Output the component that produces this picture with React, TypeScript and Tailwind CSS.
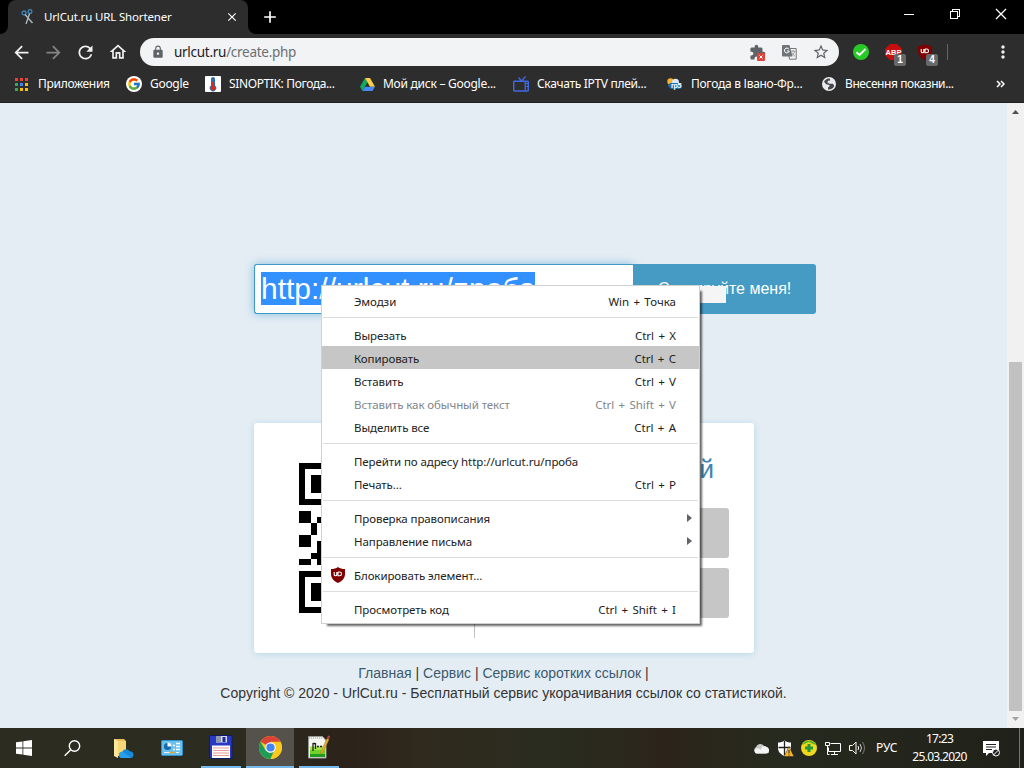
import React from "react";
import {
  MdAdd,
  MdArrowBack,
  MdArrowForward,
  MdClose,
  MdExtension,
  MdLock,
  MdMoreVert,
  MdOutlineHome,
  MdRefresh,
  MdStarBorder,
} from "react-icons/md";
import { FcGoogle } from "react-icons/fc";

function Scissors() {
  return (
    <svg width="14" height="16" viewBox="0 0 14 16" fill="none">
      <circle cx="3" cy="4" r="2" stroke="#3e86b8" strokeWidth="1.3" />
      <circle cx="9" cy="2.5" r="1.9" stroke="#3e86b8" strokeWidth="1.3" />
      <path d="M4 5.5 11.5 14M8.6 4.5 5 15" stroke="#aeb4b8" strokeWidth="1.4" />
    </svg>
  );
}

function AppsGrid() {
  const colors = ["#ea4335", "#ea4335", "#ea4335", "#34a853", "#4285f4", "#fbbc05", "#34a853", "#fbbc05", "#fbbc05"];
  return (
    <svg width="13" height="13" viewBox="0 0 13 13" shapeRendering="crispEdges">
      {colors.map((c, i) => (
        <rect key={i} x={(i % 3) * 5} y={Math.floor(i / 3) * 5} width="3" height="3" fill={c} />
      ))}
    </svg>
  );
}

function Thermometer() {
  return (
    <svg width="16" height="16" viewBox="0 0 16 16">
      <rect width="16" height="16" rx="1" fill="#fff" />
      <path d="M6 3a2 2 0 0 1 4 0v6.5a3.2 3.2 0 1 1-4 0z" fill="#2e6da8" />
      <path d="M7 6h2v4.2a2.2 2.2 0 1 1-2 0z" fill="#e2231a" />
    </svg>
  );
}

function Drive() {
  return (
    <svg width="15" height="13" viewBox="0 0 15 13">
      <path d="M5 0 0 8.7 2.5 13 7.5 4.3z" fill="#11a861" />
      <path d="M5 0h5l5 8.7h-5z" fill="#ffcf48" />
      <path d="M2.5 13 5 8.7h10L12.5 13z" fill="#4688f4" />
    </svg>
  );
}

function Television() {
  return (
    <svg width="16" height="16" viewBox="0 0 16 16" fill="none" stroke="#4169e1">
      <path d="M5.5 1.5 8.5 5 12.5.5" strokeWidth="1.3" />
      <rect x=".7" y="5.2" width="14.6" height="9.8" rx="1" strokeWidth="1.500" />
      <path d="M12.200 5.500v9" strokeWidth="1.300" />
      <path d="M12.500 7.500h3M12.500 10.500h3" strokeWidth="1" />
    </svg>
  );
}

function WeatherRp5() {
  return (
    <svg width="16" height="12" viewBox="0 0 16 12">
      <circle cx="3.5" cy="3.5" r="3.2" fill="#f7b32b" />
      <circle cx="8.5" cy="4.3" r="3.5" fill="#d9ebf8" />
      <path d="M3 5h12v4l-2 2H4L1 8z" fill="#1672b8" />
      <text x="4" y="9.5" fontSize="7" fontWeight="700" fontFamily="Liberation Sans, sans-serif" fill="#fff">rp5</text>
    </svg>
  );
}

function Globe() {
  return (
    <svg width="14" height="14" viewBox="0 0 14 14">
      <circle cx="7" cy="7" r="7" fill="#e8eaed" />
      <path d="M7.800 1.600C5.500 1.200 3 2.500 2 4.800l2.200 2.500 3.300.6v1.400L6 10.500v2c3 .3 5.300-1.300 6.200-3.500L11 6.800H7.500L5.200 5.300l1-1.500 2-.3z" fill="#45484b" />
    </svg>
  );
}

function Translate() {
  return (
    <svg width="15" height="15" viewBox="0 0 15 15">
      <path d="M5.5 3.5h8.7v10.7H7.5z" fill="none" stroke="#777" />
      <path d="M1 0h6.5l3 11.5H1a1 1 0 0 1-1-1V1a1 1 0 0 1 1-1z" fill="#70757a" />
      <path d="M6.8 4.1A2.4 2.4 0 1 0 7.2 6H5" fill="none" stroke="#fff" />
      <path d="M8.8 6.2h4.7M11 5v1.2M12.5 6.4c-.4 2-1.8 3.8-3 4.5M9.8 7.5c.6 1.6 2 3 3.2 3.7" fill="none" stroke="#888" strokeWidth=".8" />
    </svg>
  );
}

function CheckCircle() {
  return (
    <svg width="16" height="16" viewBox="0 0 16 16">
      <circle cx="8" cy="8" r="8" fill="#27cb27" />
      <path d="M3.500 8.300 6.500 11 12.500 5" fill="none" stroke="#fff" strokeWidth="1.900" />
    </svg>
  );
}

function AdblockIcon() {
  return (
    <svg width="17" height="16" viewBox="0 0 17 16">
      <path d="M5 0h7l5 5v6l-5 5H5l-5-5V5z" fill="#c70d0d" />
      <text x="8.5" y="11" textAnchor="middle" fontSize="7.500" fontWeight="700" fontFamily="Liberation Sans, sans-serif" fill="#fff">ABP</text>
    </svg>
  );
}

function Shield() {
  return (
    <svg width="14" height="16" viewBox="0 0 14 16">
      <path d="M7 0C9 1.5 11 2 14 2v5c0 4.5-3 7-7 9-4-2-7-4.500-7-9V2c3 0 5-.5 7-2z" fill="#800000" />
      <path d="M3.200 5v2.500a1.300 1.300 0 0 0 2.600 0V5M7 5v3.800h1.600a1.900 1.900 0 0 0 0-3.800H7" fill="none" stroke="#fff" strokeWidth="1.100" />
    </svg>
  );
}

function Badge({ children }: { children: React.ReactNode }) {
  return (
    <span className="absolute top-[16px] left-[17px] flex h-[12px] w-[12px] items-center justify-center rounded-[2px] bg-[#66696c] font-['Liberation_Sans',sans-serif] text-[10px] leading-none font-bold text-white">
      {children}
    </span>
  );
}

function TabStrip() {
  return (
    <div className="flex h-[34px] bg-black">
      <div className="flex w-2 items-end bg-[#2d2d2d]"><div className="h-full w-2 rounded-br-lg bg-black" /></div>
      <div className="w-60 bg-black">
        <div className="flex h-full items-center rounded-t-lg bg-[#2d2d2d] pl-[13px]">
          <Scissors />
          <span className="ml-[9px] w-[178px] text-[11.5px] tracking-[-0.16px] whitespace-nowrap text-white">UrlCut.ru URL Shortener</span>
          <MdClose size={14} color="#fff" className="ml-[3px]" />
        </div>
      </div>
      <div className="flex w-2 bg-[#2d2d2d]"><div className="h-full w-2 rounded-bl-lg bg-black" /></div>
      <MdAdd size={20} color="#fff" className="mt-[7px] ml-[4px]" />
      <div className="ml-auto flex">
        <svg width="138" height="28" viewBox="0 0 138 28" fill="none" stroke="#fff" shapeRendering="crispEdges">
          <path d="M18 14.500h10" />
          <path d="M64.500 11.500h7v7h-7zM66.500 11v-1.500h7v7H72" />
          <path d="m110 9 10 10m0-10-10 10" shapeRendering="auto" strokeWidth="1.300" />
        </svg>
      </div>
    </div>
  );
}

function Toolbar() {
  return (
    <div className="flex h-[36px] items-center bg-[#2d2d2d] pl-[6px] text-[#f1f1f1]">
      <div className="flex w-8 justify-center pr-px"><MdArrowBack size={21} /></div>
      <div className="flex w-8 justify-center pr-px text-[#858585]"><MdArrowForward size={21} /></div>
      <div className="flex w-8 justify-center pr-px"><MdRefresh size={21} /></div>
      <div className="flex w-8 justify-center"><MdOutlineHome size={20} /></div>
      <div className="ml-[6px] flex h-7 w-[699px] items-center rounded-full bg-[#f1f3f4] pr-[2px] pl-[11px]">
        <MdLock size={14} color="#5f6368" />
        <span className="ml-[9px] text-[13.5px] tracking-[-0.28px] whitespace-nowrap text-[#202124]">
          urlcut.ru<span className="text-[#6b7074]">/create.php</span>
        </span>
        <div className="ml-auto flex text-[#5f6368]">
          <div className="relative flex h-7 w-8 items-center justify-center">
            <MdExtension size={17} />
            <svg className="absolute top-[15px] left-[16px]" width="8" height="8" viewBox="0 0 8 8">
              <rect width="8" height="8" rx="1" fill="#db4437" />
              <path d="m2.500 2.500 3 3m0-3-3 3" stroke="#fff" />
            </svg>
          </div>
          <div className="flex w-8 items-center justify-center"><Translate /></div>
          <div className="flex w-8 items-center justify-center"><MdStarBorder size={18} /></div>
        </div>
      </div>
      <div className="ml-[6px] flex w-8 justify-center"><CheckCircle /></div>
      <div className="relative flex h-7 w-8 items-center justify-center"><AdblockIcon /><Badge>1</Badge></div>
      <div className="relative flex h-7 w-8 items-center justify-center"><Shield /><Badge>4</Badge></div>
      <div className="ml-[6px] h-4 w-px bg-[#666]" />
      <MdMoreVert size={20} className="ml-[45px]" />
    </div>
  );
}

type Bookmark = { icon: React.ReactNode; label: string; width: string; pad: string; tracking: string };

const bookmarks: Bookmark[] = [
  { icon: <AppsGrid />, label: "Приложения", width: "w-[111px]", pad: "gap-[10px]", tracking: "tracking-[-0.3px]" },
  { icon: <span className="flex h-4 w-4 items-center justify-center rounded-full bg-white"><FcGoogle size={14} /></span>, label: "Google", width: "w-[79px]", pad: "gap-[8px]", tracking: "tracking-[-0.3px]" },
  { icon: <Thermometer />, label: "SINOPTIK: Погода...", width: "w-[155px]", pad: "gap-[8px]", tracking: "tracking-[-0.37px]" },
  { icon: <Drive />, label: "Мой диск – Google...", width: "w-[153px]", pad: "gap-[8px]", tracking: "tracking-[-0.26px]" },
  { icon: <Television />, label: "Скачать IPTV плей...", width: "w-[154px]", pad: "gap-[8px]", tracking: "tracking-[-0.32px]" },
  { icon: <WeatherRp5 />, label: "Погода в Івано-Фр...", width: "w-[155px]", pad: "gap-[8px]", tracking: "tracking-[-0.28px]" },
  { icon: <Globe />, label: "Внесення показни...", width: "w-[172px]", pad: "gap-[9px]", tracking: "tracking-[-0.42px]" },
];

function Bookmarks() {
  return (
    <div className="flex h-[33px] items-center border-b border-[#202020] bg-[#2d2d2d] pb-[4px] pl-[15px] text-[12px] text-white">
      {bookmarks.map((b) => (
        <div key={b.label} className={`flex shrink-0 items-center whitespace-nowrap ${b.width} ${b.pad} ${b.tracking}`}>
          {b.icon}
          <span>{b.label}</span>
        </div>
      ))}
      <svg className="ml-[2px]" width="9" height="8" viewBox="0 0 9 8" fill="none" stroke="#fff" strokeWidth="1.500">
        <path d="m1 1 3 3-3 3M5 1l3 3-3 3" />
      </svg>
    </div>
  );
}

const qrRows = [
  "1111", "1000", "1011", "1011", "1011", "1000", "1111", "0000",
  "1100", "1101", "0010", "0010", "1100", "1101", "0001", "0011", "1101", "0000",
  "1111", "1000", "1011", "1011", "1011", "1000", "1111",
];

function QrCode() {
  return (
    <svg width="24" height="150" viewBox="0 0 24 150" shapeRendering="crispEdges">
      {qrRows.flatMap((row, y) =>
        row.split("").map((cell, x) =>
          cell === "1" ? <rect key={`${x}-${y}`} x={x * 6} y={y * 6} width="6" height="6" /> : null,
        ),
      )}
    </svg>
  );
}

type Item = { label: string; keys?: string; state?: "active" | "disabled"; sub?: boolean; shield?: boolean };

const groups: Item[][] = [
  [{ label: "Эмодзи", keys: "Win + Точка" }],
  [
    { label: "Вырезать", keys: "Ctrl + X" },
    { label: "Копировать", keys: "Ctrl + C", state: "active" },
    { label: "Вставить", keys: "Ctrl + V" },
    { label: "Вставить как обычный текст", keys: "Ctrl + Shift + V", state: "disabled" },
    { label: "Выделить все", keys: "Ctrl + A" },
  ],
  [{ label: "Перейти по адресу http://urlcut.ru/проба" }, { label: "Печать...", keys: "Ctrl + P" }],
  [{ label: "Проверка правописания", sub: true }, { label: "Направление письма", sub: true }],
  [{ label: "Блокировать элемент...", shield: true }],
  [{ label: "Просмотреть код", keys: "Ctrl + Shift + I" }],
];

function ContextMenu() {
  return (
    <div className="absolute top-[285px] left-[321px] h-[339px] w-[379px] border border-[#d0d0d0] bg-white pt-[3px] text-[11.5px] text-[#222] shadow-[4px_4px_2px_-2px_rgba(0,0,0,0.6)]">
      {groups.map((group, g) => (
        <div key={g}>
          {g > 0 && <div className="mx-px my-[5px] h-px bg-[#dadce0]" />}
          {group.map((item) => (
            <div
              key={item.label}
              className={`flex h-[23px] items-center whitespace-nowrap ${item.state === "active" ? "bg-[#c6c6c6]" : ""} ${item.state === "disabled" ? "text-[#80868b]" : ""}`}
            >
              <div className="w-8 shrink-0 pl-[9px]">{item.shield && <Shield />}</div>
              <span className="pt-[2px] tracking-[-0.09px]">{item.label}</span>
              {item.keys && <span className="mr-[23px] ml-auto pt-[2px] [word-spacing:1.3px]">{item.keys}</span>}
              {item.sub && (
                <svg className="mr-[7px] ml-auto" width="5" height="8" viewBox="0 0 5 8">
                  <path d="m0 0 5 4-5 4z" fill="#5f6368" />
                </svg>
              )}
            </div>
          ))}
        </div>
      ))}
    </div>
  );
}

function Page() {
  return (
    <div className="flex h-[625px] bg-[#e5edf4] font-['Liberation_Sans',Arial,sans-serif]">
      <div className="flex w-[1007px] flex-col pt-[161px]">
        <div className="relative ml-[254px] flex h-[50px] w-[562px]">
          <div className="h-[50px] w-[380px] rounded-l-[3px] border border-r-0 border-[#3b9ac6] bg-white pt-[7px] pl-[6px] shadow-[0_0_10px_rgba(70,155,210,0.6)]">
            <span className="flex h-[33px] w-[274px] items-center bg-[#3390ff] text-[30px] leading-[33px] whitespace-nowrap text-white">http://urlcut.ru/проба</span>
          </div>
          <div className="flex h-[50px] w-[183px] items-center justify-center rounded-r-[3px] bg-[#459bc4] text-[16px] whitespace-nowrap text-white">Скопируйте меня!</div>
          <div className="absolute top-[22px] left-[446px] h-[17px] w-[26px] bg-[#f5f5f5]" />
        </div>
        <div className="mt-[109px] ml-[254px] flex h-[230px] w-[500px] rounded-[3px] bg-white shadow-[0_1px_6px_rgba(70,165,200,0.3)]">
          <div className="h-[215px] w-[221px] border-r border-[#c0c0c0] pt-[40px] pl-[45px]"><QrCode /></div>
          <div className="flex w-[254px] flex-col items-end pt-[31px]">
            <h2 className="mr-[15px] h-[54px] text-[26px] leading-[30px] text-[#3e83b2]">й</h2>
            <div className="h-[50px] w-[210px] rounded-[3px] bg-[#c6c6c6]" />
            <div className="mt-[10px] h-[50px] w-[210px] rounded-[3px] bg-[#c6c6c6]" />
          </div>
        </div>
        <div className="mt-[10px] text-center text-[14px] leading-5 whitespace-nowrap text-[#333]">
          <div>
            <span className="text-[#3c5a6e]">Главная</span> | <span className="text-[#3c5a6e]">Сервис</span> | <span className="text-[#3c5a6e]">Сервис коротких ссылок</span> |
          </div>
          <div>Copyright © 2020 - UrlCut.ru - Бесплатный сервис укорачивания ссылок со статистикой.</div>
        </div>
      </div>
      <div className="flex w-[17px] flex-col items-center bg-[#f1f1f1] pt-[7px]">
        <svg width="7" height="4" viewBox="0 0 7 4"><path d="M0 4 3.500 0 7 4z" fill="#505050" /></svg>
        <div className="mt-[248px] h-[349px] w-[13px] bg-[#c1c1c1]" />
        <svg className="mt-[6px]" width="7" height="4" viewBox="0 0 7 4"><path d="M0 0 3.500 4 7 0z" fill="#a3a3a3" /></svg>
      </div>
    </div>
  );
}

function FolderCloud() {
  return (
    <svg width="21" height="21" viewBox="0 0 21 21">
      <path d="M1 1h10l2 2v15H4z" fill="#e8bf5b" />
      <path d="M1 1l4 2v17l-4-2z" fill="#ffe69b" />
      <path d="M5 3h8v12l-8 3z" fill="#f7d675" />
      <path d="M6 17.500a3 3 0 0 1 3-3.200 4.200 4.200 0 0 1 7.600-1A3.500 3.500 0 0 1 20.500 17a3 3 0 0 1-2.500 3H9a3 3 0 0 1-3-2.500z" fill="#168bdc" />
      <path d="m10 14 8 6H9a3 3 0 0 1-3-2.500A3 3 0 0 1 10 14z" fill="#2aa0ec" />
    </svg>
  );
}

function ControlPanel() {
  return (
    <svg width="22" height="16" viewBox="0 0 22 16">
      <rect x=".5" y=".5" width="21" height="15" rx="1" fill="#6bc1ee" stroke="#338fc9" />
      <circle cx="6.500" cy="6.500" r="3.600" fill="#1769ad" />
      <path d="M6.500 6.500V2.500a4 4 0 0 1 4 4z" fill="#fff" />
      <path d="M12 5.500h2m-2 4h2m1-6h4m-4 3h4m-4 3h4" stroke="#fff" strokeWidth="1.400" />
      <path d="M3 12.500h7m5 0h3" stroke="#e9f7ff" />
      <path d="M8.500 12.500h5" stroke="#e8a824" strokeWidth="1.500" />
    </svg>
  );
}

function Floppy() {
  return (
    <svg width="24" height="24" viewBox="0 0 24 24">
      <path d="M1 .5h22v23H2L.5 22V.5z" fill="#2739c5" stroke="#121a68" />
      <path d="M7 1h11v6.500H7z" fill="#d7dbe5" />
      <path d="M7 1h5v6.500H7z" fill="#8f97ac" /><path d="M13.500 2h3v5h-3z" fill="#1c2b98" />
      <path d="M3 10.500h18V23H3z" fill="#fff" />
      <path d="M4 13h16M4 15.500h16M4 18h16M4 20.500h16" stroke="#e79b9b" strokeWidth="1.200" />
    </svg>
  );
}

function ChromeLogo() {
  return (
    <svg width="23" height="23" viewBox="0 0 24 24">
      <circle cx="12" cy="12" r="12" fill="#fbc91c" />
      <path d="M12 12 1.600 6A12 12 0 0 1 22.400 6H12z" fill="#dc4437" />
      <path d="M1.600 6 7 15.200 12 17.400 12 12h5L12 24A12 12 0 0 1 1.600 6z" fill="#1c9d58" />
      <path d="M12 6.500h10.600A12 12 0 0 1 12 24l5-9z" fill="#fbc91c" />
      <circle cx="12" cy="12" r="5.500" fill="#fff" />
      <circle cx="12" cy="12" r="4.300" fill="#4285f4" />
    </svg>
  );
}

function NotepadIcon() {
  return (
    <svg width="24" height="24" viewBox="0 0 24 24">
      <path d="M1.500 1.500h14l3.500 4v17.500H1.500z" fill="#f3f5ee" stroke="#999" />
      <path d="M3 11.500h15V22H3z" fill="#a5e83c" /><path d="M3 15h15v7H3z" fill="#6fd22a" /><path d="M3 19h15v3H3z" fill="#249a1e" />
      <path d="M2 3h13" stroke="#999" strokeDasharray="1 1" />
      <path d="M6 16V8M6 8.500h2M8.500 8v6M10 11.500h2M13 11.500h2" stroke="#222" strokeWidth="1.300" fill="none" />
      <path d="m13.500 17.500 6.500-14 2 1-6 12.500-2.500 2z" fill="#e8ae34" stroke="#a87a20" strokeWidth=".5" />
      <path d="m20 3 1.200-2.500 2 1L22 4z" fill="#b9424a" />
    </svg>
  );
}

function Taskbar() {
  return (
    <div className="flex h-10 items-center bg-[linear-gradient(to_right,#2c2d20_0%,#2b2b20_25%,#2c221a_34%,#2f2a1d_41%,#2a2c20_54%,#2c241b_65%,#272a1e_76%,#20211a_100%)] text-white">
      <div className="flex w-12 justify-center">
        <svg width="16" height="16" viewBox="0 0 16 16" fill="#fff"><path d="M0 2.300 6.500 1.400v6.100H0zM7.300 1.300 16 0v7.500H7.300zM0 8.400h6.500v6.200L0 13.700zM7.300 8.400H16V16l-8.700-1.300z" /></svg>
      </div>
      <div className="flex w-12 justify-center">
        <svg width="17" height="17" viewBox="0 0 17 17" fill="none" stroke="#fff" strokeWidth="1.400"><circle cx="10.500" cy="6" r="5.200" /><path d="M6.800 9.700.7 15.800" /></svg>
      </div>
      <div className="flex w-[54px] justify-center"><FolderCloud /></div>
      <div className="flex w-[43px] justify-center"><ControlPanel /></div>
      <div className="ml-[8px] flex h-10 w-[40px] items-center justify-center border-b-2 border-[#76b9ed]"><Floppy /></div>
      <div className="ml-[5px] flex h-10 w-12 items-center justify-center border-b-2 border-[#76b9ed] bg-[#55524b]"><ChromeLogo /></div>
      <div className="ml-[5px] flex h-10 w-[40px] items-center justify-center border-b-2 border-[#76b9ed]"><NotepadIcon /></div>
      <div className="ml-auto flex items-center">
        <div className="flex w-6 justify-center">
          <svg width="16" height="11" viewBox="0 0 16 11"><path d="M4 10.500a3.500 3.500 0 0 1-1-6.500A4.500 4.500 0 0 1 11 3a4 4 0 0 1 1.500 7.500z" fill="#c8c8c8" /><path d="M3 10.500a2.800 2.800 0 0 1 1-5.200c2 0 3 1 4 1.500A4 4 0 0 1 16 8a2.500 2.500 0 0 1-2.500 2.500z" fill="#f4f4f4" /></svg>
        </div>
        <div className="flex w-6 justify-center">
          <svg width="17" height="17" viewBox="0 0 17 17"><path d="M7.500.5c2 1.500 4 2 6.500 2V8c0 4-3 6.500-6.500 8C4 14.500 1 12 1 8V2.500c2.500 0 4.500-.5 6.500-2z" fill="#fff" /><path d="M7.500 1v14M1.500 7.500h12" stroke="#222" strokeWidth="1.300" /><path d="m12 6.500 5 10H7z" fill="#f8b72a" stroke="#222" strokeWidth=".5" /><path d="M12 10v3.500m0 1v1" stroke="#222" /></svg>
        </div>
        <div className="flex w-6 justify-center">
          <svg width="16" height="16" viewBox="0 0 16 16"><circle cx="8" cy="8" r="8" fill="#f2d71f" /><path d="M1 5A8 8 0 0 1 15 5l-3-1-4-2z" fill="#52b62c" /><path d="M6.500 4h3v2.500H12v3H9.500V12h-3V9.500H4v-3h2.500z" fill="#21993a" /></svg>
        </div>
        <div className="flex w-6 justify-center">
          <svg width="16" height="15" viewBox="0 0 16 15" fill="none" stroke="#fff"><path d="M5.500 2.500h10v8h-12v-4M9.500 10.500v3M6 13.500h7M.5 1.500h4v3h-4zM2.500 4.500v9h2" /></svg>
        </div>
        <div className="flex w-6 justify-center">
          <svg width="17" height="14" viewBox="0 0 17 14" fill="none" stroke="#fff"><path d="M.5 4.500h3L7 1v12L3.500 9.500h-3z" /><path d="M9 5q1.400 2 0 4" /><path d="M11 3q3 4 0 8" stroke="#ccc" /><path d="M13.500 1q4 6 0 12" stroke="#777" /></svg>
        </div>
        <span className="ml-[7px] w-[28px] text-[12px] tracking-[-0.1px]">РУС</span>
        <div className="w-[71px] text-center text-[12px] leading-[18px] tracking-[-0.7px] whitespace-nowrap"><div>17:23</div><div>25.03.2020</div></div>
        <svg className="ml-[8px]" width="17" height="17" viewBox="0 0 17 17"><path d="M0 1h16v12H6l-3 3v-3H0z" fill="#fff" /><path d="M3 4.500h10M3 7h10M3 9.500h6" stroke="#222" /><circle cx="13" cy="12.500" r="3.500" fill="#222" stroke="#fff" /><path d="m10.500 15 5-5" stroke="#fff" /></svg>
        <div className="mr-[4px] ml-[19px] h-10 w-px bg-[#77776f]" />
      </div>
    </div>
  );
}

export default function App() {
  return (
    <div className="relative flex h-[768px] w-[1024px] flex-col overflow-hidden font-['Noto_Sans','Open_Sans',sans-serif]">
      <TabStrip />
      <Toolbar />
      <Bookmarks />
      <Page />
      <Taskbar />
      <ContextMenu />
    </div>
  );
}
